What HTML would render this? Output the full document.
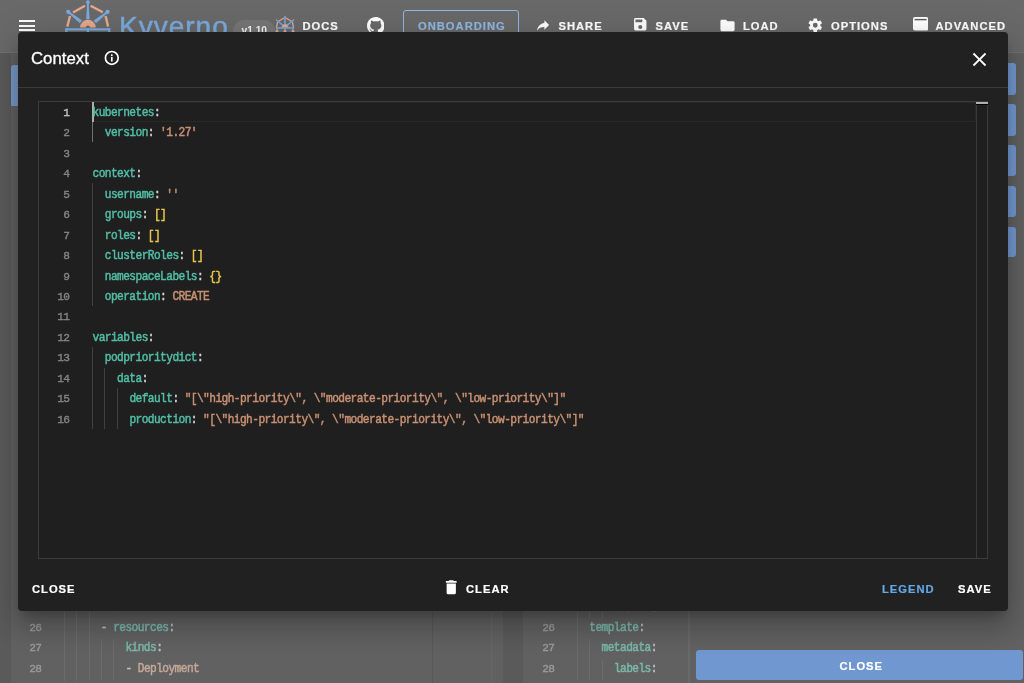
<!DOCTYPE html>
<html><head><meta charset="utf-8">
<style>
*{box-sizing:border-box;margin:0;padding:0}
html,body{width:1024px;height:683px;overflow:hidden;background:#5a5a5a;font-family:"Liberation Sans",sans-serif}
.abs{position:absolute}
#appbar{left:0;top:0;width:1024px;height:53px;background:#696969;border-bottom:1px solid #727272}
.btxt{-webkit-text-stroke:0.2px currentColor;font-family:"Liberation Sans",sans-serif;font-weight:bold;font-size:11.2px;letter-spacing:1px;color:#fff;white-space:nowrap;line-height:1}
#modal{left:18px;top:32px;width:990px;height:578.6px;background:#212121;border-radius:4px;box-shadow:0 8px 11px -5px rgba(0,0,0,.22),0 17px 27px 2px rgba(0,0,0,.16),0 6px 33px 6px rgba(0,0,0,.12);overflow:hidden}
.code{transform:scaleY(1.1);transform-origin:0 9.8px;-webkit-text-stroke:0.45px currentColor;font-family:"Liberation Mono",monospace;font-size:11.2px;letter-spacing:-0.57px;white-space:pre;line-height:20.47px;height:20.47px}
.k{color:#52bea6}.p{color:#d4d4d4}.s{color:#c99072}.b{color:#e8c64a}
.ln.act{color:#c6c6c6}
.k2{color:#7ab8a8}.p2{color:#c0c0c0}.s2{color:#c4a898}
.ln2{-webkit-text-stroke:0.35px currentColor;font-family:"Liberation Mono",monospace;font-size:11.2px;letter-spacing:-0.57px;color:#9a9a9a;text-align:right;width:40px;line-height:20.47px;height:20.47px}
.ln{-webkit-text-stroke:0.35px currentColor;left:-63px;font-family:"Liberation Mono",monospace;font-size:11.2px;letter-spacing:-0.57px;color:#858585;text-align:right;width:40px;line-height:20.47px;height:20.47px}
#modal,#page{will-change:transform}
</style></head><body>
<div id="page" class="abs" style="left:0;top:0;width:1024px;height:683px">
  <div id="appbar" class="abs"></div>
  <!-- left card -->
  <div class="abs" style="left:11px;top:53px;width:492px;height:630px;background:#616161"></div>
  <div class="abs" style="left:11px;top:65px;width:40px;height:41px;background:#7799c6;border-radius:3px 3px 0 0"></div>
  <div class="abs" style="left:431.5px;top:110px;width:1px;height:573px;background:#585858"></div>
  <div class="abs" style="left:490.5px;top:110px;width:1px;height:573px;background:#676767"></div>
  <!-- right card -->
  <div class="abs" style="left:523px;top:53px;width:501px;height:630px;background:#616161"></div>
  <div class="abs" style="left:688px;top:110px;width:1.5px;height:573px;background:#696969"></div>
  <!-- sidebar -->
  
  <div class="abs" style="left:960px;top:63.4px;width:55.5px;height:31.6px;background:#7499d2;border-radius:3px"></div>
  <div class="abs" style="left:960px;top:104.4px;width:55.5px;height:31.2px;background:#7499d2;border-radius:3px"></div>
  <div class="abs" style="left:960px;top:145px;width:55.5px;height:31px;background:#7499d2;border-radius:3px"></div>
  <div class="abs" style="left:960px;top:186px;width:55.5px;height:31px;background:#7499d2;border-radius:3px"></div>
  <div class="abs" style="left:960px;top:226.6px;width:55.5px;height:30.8px;background:#7499d2;border-radius:3px"></div>
  <div class="abs" style="left:696px;top:649.7px;width:326.6px;height:30.5px;background:#7097d0;border-radius:3px"></div>
  <div class="abs btxt" style="left:839.5px;top:661px">CLOSE</div>
<div class="abs code" style="left:64.00px;top:595.30px"><span class="p2">      </span><span class="k2">any</span><span class="p2">:</span></div>
<div class="abs ln2" style="left:1.50px;top:595.30px">25</div>
<div class="abs" style="left:64.00px;top:598.30px;width:1px;height:20.97px;background:#6c6c6c"></div>
<div class="abs" style="left:76.30px;top:598.30px;width:1px;height:20.97px;background:#6c6c6c"></div>
<div class="abs" style="left:88.60px;top:598.30px;width:1px;height:20.97px;background:#6c6c6c"></div>
<div class="abs code" style="left:64.00px;top:617.77px"><span class="p2">      - </span><span class="k2">resources</span><span class="p2">:</span></div>
<div class="abs ln2" style="left:1.50px;top:617.77px">26</div>
<div class="abs" style="left:64.00px;top:618.77px;width:1px;height:20.97px;background:#6c6c6c"></div>
<div class="abs" style="left:76.30px;top:618.77px;width:1px;height:20.97px;background:#6c6c6c"></div>
<div class="abs" style="left:88.60px;top:618.77px;width:1px;height:20.97px;background:#6c6c6c"></div>
<div class="abs code" style="left:64.00px;top:638.24px"><span class="p2">          </span><span class="k2">kinds</span><span class="p2">:</span></div>
<div class="abs ln2" style="left:1.50px;top:638.24px">27</div>
<div class="abs" style="left:64.00px;top:639.24px;width:1px;height:20.97px;background:#6c6c6c"></div>
<div class="abs" style="left:76.30px;top:639.24px;width:1px;height:20.97px;background:#6c6c6c"></div>
<div class="abs" style="left:88.60px;top:639.24px;width:1px;height:20.97px;background:#6c6c6c"></div>
<div class="abs" style="left:100.90px;top:639.24px;width:1px;height:20.97px;background:#6c6c6c"></div>
<div class="abs" style="left:113.20px;top:639.24px;width:1px;height:20.97px;background:#6c6c6c"></div>
<div class="abs code" style="left:64.00px;top:658.71px"><span class="p2">          - </span><span class="s2">Deployment</span></div>
<div class="abs ln2" style="left:1.50px;top:658.71px">28</div>
<div class="abs" style="left:64.00px;top:659.71px;width:1px;height:20.97px;background:#6c6c6c"></div>
<div class="abs" style="left:76.30px;top:659.71px;width:1px;height:20.97px;background:#6c6c6c"></div>
<div class="abs" style="left:88.60px;top:659.71px;width:1px;height:20.97px;background:#6c6c6c"></div>
<div class="abs" style="left:100.90px;top:659.71px;width:1px;height:20.97px;background:#6c6c6c"></div>
<div class="abs" style="left:113.20px;top:659.71px;width:1px;height:20.97px;background:#6c6c6c"></div>
<div class="abs code" style="left:577.00px;top:595.30px"><span class="p2">      </span><span class="k2">app</span><span class="p2">: </span><span class="s2">nginx</span></div>
<div class="abs ln2" style="left:514.50px;top:595.30px">25</div>
<div class="abs" style="left:577.00px;top:598.30px;width:1px;height:20.97px;background:#6c6c6c"></div>
<div class="abs" style="left:589.30px;top:598.30px;width:1px;height:20.97px;background:#6c6c6c"></div>
<div class="abs" style="left:601.60px;top:598.30px;width:1px;height:20.97px;background:#6c6c6c"></div>
<div class="abs code" style="left:577.00px;top:617.77px"><span class="p2">  </span><span class="k2">template</span><span class="p2">:</span></div>
<div class="abs ln2" style="left:514.50px;top:617.77px">26</div>
<div class="abs" style="left:577.00px;top:618.77px;width:1px;height:20.97px;background:#6c6c6c"></div>
<div class="abs code" style="left:577.00px;top:638.24px"><span class="p2">    </span><span class="k2">metadata</span><span class="p2">:</span></div>
<div class="abs ln2" style="left:514.50px;top:638.24px">27</div>
<div class="abs" style="left:577.00px;top:639.24px;width:1px;height:20.97px;background:#6c6c6c"></div>
<div class="abs" style="left:589.30px;top:639.24px;width:1px;height:20.97px;background:#6c6c6c"></div>
<div class="abs code" style="left:577.00px;top:658.71px"><span class="p2">      </span><span class="k2">labels</span><span class="p2">:</span></div>
<div class="abs ln2" style="left:514.50px;top:658.71px">28</div>
<div class="abs" style="left:577.00px;top:659.71px;width:1px;height:20.97px;background:#6c6c6c"></div>
<div class="abs" style="left:589.30px;top:659.71px;width:1px;height:20.97px;background:#6c6c6c"></div>
<div class="abs" style="left:601.60px;top:659.71px;width:1px;height:20.97px;background:#6c6c6c"></div>

  <!-- hamburger -->
  <div class="abs" style="left:19px;top:20.2px;width:16px;height:2px;background:#fff"></div>
  <div class="abs" style="left:19px;top:24.6px;width:16px;height:2px;background:#fff"></div>
  <div class="abs" style="left:19px;top:28.8px;width:16px;height:2px;background:#fff"></div>
  <!-- logo -->
  <svg class="abs" style="left:0;top:0" width="120" height="40" viewBox="0 0 120 40">
    <g stroke="#e6a98d" stroke-width="2.4" stroke-linecap="butt" fill="none">
      <line x1="73" y1="12.5" x2="85" y2="5.8"/>
      <line x1="90.6" y1="5.8" x2="102.8" y2="12.3"/>
      <line x1="70" y1="16" x2="67.3" y2="26.6"/>
      <line x1="105.6" y1="16" x2="108.1" y2="26.6"/>
    </g>
    <path fill="#e4a78b" d="M80.1,27.5 A7.8,7.8 0 0 1 95.7,27.5 L90,27.5 A2.1,2.1 0 0 0 85.8,27.5 Z"/>
    <g fill="#79a9de">
      <path d="M68.57,13.75 L70.36,14.71 L74.43,18.43 L79.85,23.35 L82.14,20.44 L76.10,16.32 L71.54,13.22 L70.18,11.71 Z M68.20,11.80 m-2.10,0 a2.10,2.10 0 1,0 4.20,0 a2.10,2.10 0 1,0 -4.20,0 M105.62,11.71 L104.26,13.22 L99.70,16.32 L93.66,20.44 L95.95,23.35 L101.37,18.43 L105.44,14.71 L107.23,13.75 Z M107.60,11.80 m-2.10,0 a2.10,2.10 0 1,0 4.20,0 a2.10,2.10 0 1,0 -4.20,0 M86.70,3.70 L87.00,5.70 L86.65,12.20 L86.10,19.20 L89.70,19.20 L89.15,12.20 L88.80,5.70 L89.10,3.70 Z M87.90,2.20 m-1.90,0 a1.90,1.90 0 1,0 3.80,0 a1.90,1.90 0 1,0 -3.80,0"/>
      <rect x="65.2" y="28.2" width="45.1" height="2.4" rx="1"/>
      <rect x="65.2" y="28.2" width="2.3" height="6"/>
      <rect x="108" y="28.2" width="2.3" height="6"/>
      <rect x="86.8" y="28.2" width="2.2" height="6"/>
    </g>
  </svg>
  <div class="abs" style="left:119px;top:12.5px;font-size:28px;letter-spacing:1px;color:#7aaadc;line-height:1;-webkit-text-stroke:0.5px #7aaadc">Kyverno</div>
  <div class="abs" style="left:233px;top:19.8px;width:41.5px;height:22px;border-radius:11px;background:#767676"></div>
  <div class="abs" style="left:241.5px;top:25.5px;font-size:10.2px;color:#f4f4f4;line-height:1;font-weight:bold">v1.10</div>
  <!-- small logo -->
  <svg class="abs" style="left:274px;top:15px" width="22" height="20" viewBox="0 0 22 20">
    <g stroke="#e4a78b" stroke-width="1.3" fill="none" stroke-linecap="round">
      <line x1="5" y1="6" x2="10" y2="3"/><line x1="12" y1="3" x2="17" y2="6"/>
      <line x1="3.5" y1="7.5" x2="2.5" y2="12.5"/><line x1="18.5" y1="7.5" x2="19.5" y2="12.5"/>
    </g>
    <path fill="#e4a78b" d="M7.5,12.6 A3.5,3.5 0 0 1 14.5,12.6 Z"/>
    <g stroke="#79a9de" stroke-width="1.5" stroke-linecap="round">
      <line x1="11" y1="1.5" x2="11" y2="9"/><line x1="2.5" y1="5" x2="8.5" y2="10"/><line x1="19.5" y1="5" x2="13.5" y2="10"/>
      <line x1="2.5" y1="13" x2="19.5" y2="13"/>
      <line x1="3" y1="13" x2="3" y2="16"/><line x1="11" y1="13" x2="11" y2="16"/><line x1="19" y1="13" x2="19" y2="16"/>
    </g>
    <g fill="#e4a78b"><circle cx="3" cy="16.5" r="1.5"/><circle cx="11" cy="16.5" r="1.5"/><circle cx="19" cy="16.5" r="1.5"/></g>
  </svg>
  <div class="abs btxt" style="left:302.5px;top:21px">DOCS</div>
  <!-- github -->
  <svg class="abs" style="left:366.5px;top:16.5px" width="17.5" height="17.5" viewBox="0 0 16 16"><path fill="#fff" d="M8 0C3.58 0 0 3.58 0 8c0 3.54 2.29 6.53 5.47 7.59.4.07.55-.17.55-.38 0-.19-.01-.82-.01-1.49-2.01.37-2.53-.49-2.69-.94-.09-.23-.48-.94-.82-1.13-.28-.15-.68-.52-.01-.53.63-.01 1.08.58 1.23.82.72 1.21 1.87.87 2.33.66.07-.52.28-.87.51-1.07-1.78-.2-3.640-.89-3.64-3.95 0-.87.31-1.590.82-2.15-.08-.2-.36-1.02.08-2.12 0 0 .67-.21 2.2.82.64-.18 1.32-.27 2-.27.68 0 1.36.09 2 .27 1.53-1.04 2.2-.82 2.2-.82.44 1.1.16 1.92.08 2.12.51.56.82 1.27.82 2.15 0 3.07-1.87 3.75-3.65 3.95.29.25.54.73.54 1.48 0 1.07-.01 1.93-.01 2.2 0 .21.15.46.55.38A8.013 8.013 0 0016 8c0-4.42-3.58-8-8-8z"/></svg>
  <!-- onboarding -->
  <div class="abs" style="left:402.5px;top:10px;width:116.5px;height:32px;border:1.2px solid #8fb8e2;border-radius:3px"></div>
  <div class="abs btxt" style="left:418px;top:21px;color:#8fb8e2">ONBOARDING</div>
  <!-- share -->
  <svg class="abs" style="left:535.3px;top:17.3px" width="16.1" height="16.1" viewBox="0 0 24 24"><path fill="#fff" d="M21,12L14,5V9C7,10 4,15 3,20C5.5,16.5 9,14.9 14,14.9V19L21,12Z"/></svg>
  <div class="abs btxt" style="left:558.5px;top:21px">SHARE</div>
  <!-- save -->
  <svg class="abs" style="left:632.2px;top:16.3px" width="16.5" height="16.5" viewBox="0 0 24 24"><path fill="#fff" d="M15,9H5V5H15M12,19A3,3 0 0,1 9,16A3,3 0 0,1 12,13A3,3 0 0,1 15,16A3,3 0 0,1 12,19M17,3H5C3.89,3 3,3.9 3,5V19A2,2 0 0,0 5,21H19A2,2 0 0,0 21,19V7L17,3Z"/></svg>
  <div class="abs btxt" style="left:655.5px;top:21px">SAVE</div>
  <!-- load -->
  <svg class="abs" style="left:719.3px;top:17px" width="17" height="17" viewBox="0 0 24 24"><path fill="#fff" d="M10,4H4C2.89,4 2,4.89 2,6V18A2,2 0 0,0 4,20H20A2,2 0 0,0 22,18V8C22,6.89 21.1,6 20,6H12L10,4Z"/></svg>
  <div class="abs btxt" style="left:743px;top:21px">LOAD</div>
  <!-- options -->
  <svg class="abs" style="left:807.3px;top:16.7px" width="16.5" height="16.5" viewBox="0 0 24 24"><path fill="#fff" d="M12,15.5A3.5,3.5 0 0,1 8.5,12A3.5,3.5 0 0,1 12,8.5A3.5,3.5 0 0,1 15.5,12A3.5,3.5 0 0,1 12,15.5M19.43,12.97C19.47,12.65 19.5,12.33 19.5,12C19.5,11.67 19.47,11.34 19.43,11L21.54,9.37C21.73,9.22 21.78,8.95 21.66,8.73L19.66,5.27C19.54,5.05 19.27,4.96 19.05,5.05L16.56,6.05C16.04,5.66 15.5,5.32 14.87,5.07L14.5,2.42C14.46,2.18 14.25,2 14,2H10C9.75,2 9.54,2.18 9.5,2.42L9.13,5.07C8.5,5.32 7.96,5.66 7.44,6.05L4.95,5.05C4.73,4.96 4.46,5.05 4.34,5.27L2.34,8.73C2.21,8.95 2.27,9.22 2.46,9.37L4.57,11C4.53,11.34 4.5,11.67 4.5,12C4.5,12.33 4.53,12.65 4.57,12.97L2.46,14.63C2.27,14.78 2.21,15.05 2.34,15.27L4.34,18.73C4.46,18.95 4.73,19.03 4.95,18.95L7.44,17.94C7.96,18.34 8.5,18.68 9.13,18.93L9.5,21.58C9.54,21.82 9.75,22 10,22H14C14.25,22 14.46,21.82 14.5,21.58L14.87,18.93C15.5,18.67 16.04,18.34 16.56,17.94L19.05,18.95C19.27,19.03 19.54,18.95 19.66,18.73L21.66,15.27C21.78,15.05 21.73,14.78 21.54,14.63L19.43,12.97Z"/></svg>
  <div class="abs btxt" style="left:831px;top:21px">OPTIONS</div>
  <!-- advanced -->
  <svg class="abs" style="left:912.8px;top:17.2px" width="15.2" height="13.6" viewBox="0 0 15.2 13.6"><rect x="0" y="0" width="15.2" height="13.6" rx="2" fill="#fff"/><rect x="1.6" y="1.9" width="12" height="1.4" fill="#5a5a5a"/></svg>
  <div class="abs btxt" style="left:935.5px;top:21px">ADVANCED</div>

</div>

<div id="modal" class="abs">
  <div class="abs" style="left:13px;top:19px;font-size:16.8px;color:#fff;line-height:1;-webkit-text-stroke:0.3px #fff">Context</div>
  <svg class="abs" style="left:84.5px;top:18px" width="17" height="17" viewBox="0 0 17 17"><circle cx="8.8" cy="7.9" r="6.4" fill="none" stroke="#fff" stroke-width="1.7"/><rect x="7.95" y="4.3" width="1.7" height="1.7" rx=".5" fill="#fff"/><rect x="7.95" y="6.9" width="1.7" height="4.6" fill="#fff"/></svg>
  <svg class="abs" style="left:950.4px;top:15.8px" width="23" height="23" viewBox="0 0 24 24"><path fill="#fff" d="M19,6.41L17.59,5L12,10.59L6.41,5L5,6.41L10.59,12L5,17.59L6.41,19L12,13.41L17.59,19L19,17.59L13.41,12L19,6.41Z"/></svg>
  <div class="abs" style="left:0;top:54.6px;width:990px;height:1px;background:#3a3a3a"></div>
  <!-- editor -->
  <div class="abs" id="editor" style="left:20px;top:69px;width:950px;height:458px;border:1px solid #3c3c3c;background:#1f1f1f"></div>
  <div class="abs" style="left:74px;top:69.5px;width:884px;height:20.5px;border:1px solid #282828"></div>
  <div class="abs" style="left:957.5px;top:69px;width:1px;height:458px;background:#3a3a3a"></div>
  <div class="abs" style="left:957.5px;top:69.5px;width:12px;height:2px;background:#b0b0b0"></div>
  <div class="abs" style="left:957.5px;top:71.5px;width:12px;height:1px;background:#000"></div>
  <!-- indent guides -->
  <div class="abs" style="left:74px;top:89.97px;width:1px;height:20.47px;background:#707070"></div>
  <div class="abs" style="left:74px;top:151.38px;width:1px;height:122.82px;background:#404040"></div>
  <div class="abs" style="left:74px;top:315.14px;width:1px;height:81.88px;background:#404040"></div>
  <div class="abs" style="left:86.3px;top:335.61px;width:1px;height:61.41px;background:#404040"></div>
  <div class="abs" style="left:98.6px;top:356.08px;width:1px;height:40.94px;background:#404040"></div>
  <div class="abs" style="left:74px;top:69.5px;width:1.5px;height:20.5px;background:#aeafad"></div>
  <div class="abs" id="codebox" style="left:74.5px;top:70.8px;width:880px;height:340px">
  <div class="abs" style="left:-63px;top:0;width:1px;height:1px"></div>
<div class="abs code" style="top:0.00px"><span class="k">kubernetes</span><span class="p">:</span></div>
<div class="abs ln act" style="top:0.00px">1</div>
<div class="abs code" style="top:20.47px"><span class="p">  </span><span class="k">version</span><span class="p">: </span><span class="s">&#x27;1.27&#x27;</span></div>
<div class="abs ln" style="top:20.47px">2</div>
<div class="abs code" style="top:40.94px"></div>
<div class="abs ln" style="top:40.94px">3</div>
<div class="abs code" style="top:61.41px"><span class="k">context</span><span class="p">:</span></div>
<div class="abs ln" style="top:61.41px">4</div>
<div class="abs code" style="top:81.88px"><span class="p">  </span><span class="k">username</span><span class="p">: </span><span class="s">&#x27;&#x27;</span></div>
<div class="abs ln" style="top:81.88px">5</div>
<div class="abs code" style="top:102.35px"><span class="p">  </span><span class="k">groups</span><span class="p">: </span><span class="b">[]</span></div>
<div class="abs ln" style="top:102.35px">6</div>
<div class="abs code" style="top:122.82px"><span class="p">  </span><span class="k">roles</span><span class="p">: </span><span class="b">[]</span></div>
<div class="abs ln" style="top:122.82px">7</div>
<div class="abs code" style="top:143.29px"><span class="p">  </span><span class="k">clusterRoles</span><span class="p">: </span><span class="b">[]</span></div>
<div class="abs ln" style="top:143.29px">8</div>
<div class="abs code" style="top:163.76px"><span class="p">  </span><span class="k">namespaceLabels</span><span class="p">: </span><span class="b">{}</span></div>
<div class="abs ln" style="top:163.76px">9</div>
<div class="abs code" style="top:184.23px"><span class="p">  </span><span class="k">operation</span><span class="p">: </span><span class="s">CREATE</span></div>
<div class="abs ln" style="top:184.23px">10</div>
<div class="abs code" style="top:204.70px"></div>
<div class="abs ln" style="top:204.70px">11</div>
<div class="abs code" style="top:225.17px"><span class="k">variables</span><span class="p">:</span></div>
<div class="abs ln" style="top:225.17px">12</div>
<div class="abs code" style="top:245.64px"><span class="p">  </span><span class="k">podprioritydict</span><span class="p">:</span></div>
<div class="abs ln" style="top:245.64px">13</div>
<div class="abs code" style="top:266.11px"><span class="p">    </span><span class="k">data</span><span class="p">:</span></div>
<div class="abs ln" style="top:266.11px">14</div>
<div class="abs code" style="top:286.58px"><span class="p">      </span><span class="k">default</span><span class="p">: </span><span class="s">&quot;[\&quot;high-priority\&quot;, \&quot;moderate-priority\&quot;, \&quot;low-priority\&quot;]&quot;</span></div>
<div class="abs ln" style="top:286.58px">15</div>
<div class="abs code" style="top:307.05px"><span class="p">      </span><span class="k">production</span><span class="p">: </span><span class="s">&quot;[\&quot;high-priority\&quot;, \&quot;moderate-priority\&quot;, \&quot;low-priority\&quot;]&quot;</span></div>
<div class="abs ln" style="top:307.05px">16</div>
  </div>

  <!-- footer -->
  <div class="abs btxt" style="left:14px;top:552px">CLOSE</div>
  <svg class="abs" style="left:424.2px;top:546.4px" width="18.5" height="18.5" viewBox="0 0 24 24"><path fill="#fff" d="M19,4H15.5L14.5,3H9.5L8.5,4H5V6H19M6,19A2,2 0 0,0 8,21H16A2,2 0 0,0 18,19V7H6V19Z"/></svg>
  <div class="abs btxt" style="left:448px;top:552px">CLEAR</div>
  <div class="abs btxt" style="left:864px;top:552px;color:#64a8e8">LEGEND</div>
  <div class="abs btxt" style="left:940px;top:552px">SAVE</div>
</div>
</body></html>
